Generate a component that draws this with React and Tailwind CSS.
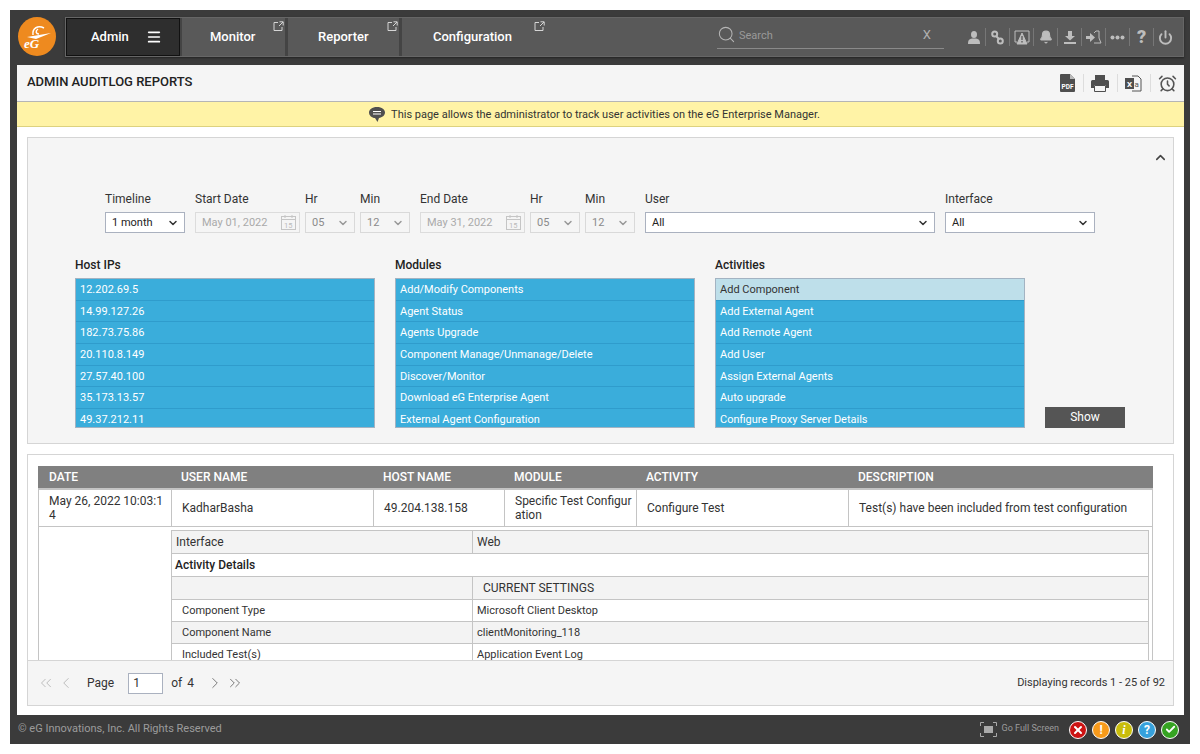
import React from "react";
import { ChevronDown, ChevronUp, ChevronLeft, ChevronRight, ChevronsLeft, ChevronsRight, Search, Menu, Bell, Power, Check, X, AlarmClock } from "lucide-react";

const Ext = () => (
  <svg width="11" height="11" viewBox="0 0 11 11" fill="none" stroke="#d5d5d5" strokeWidth="1" className="absolute">
    <path d="M5 1.500H1V9.500H9V6M6.500 .8H10.200V4.500M10 1L6 5" />
  </svg>
);

const Sep = () => <span className="w-px h-[18px] bg-[#777]" />;

function Logo() {
  return (
    <svg width="38" height="39" viewBox="0 0 38 39" className="shrink-0">
      <ellipse cx="19" cy="19.500" rx="19" ry="19.500" fill="#ee8a1f" />
      <path d="M15 18C14 11 20 8 26 11M20 12C17 14 18 17 21 17" fill="none" stroke="#fff" strokeWidth="1.500" />
      <path d="M9 20L33 16L18 22Z" fill="#fff" />
      <text x="6" y="31" fontSize="13" fontWeight="700" fontStyle="italic" fill="#fff" fontFamily="'Liberation Serif',serif">eG</text>
    </svg>
  );
}

function Tab({ label, w, pl, extLeft }) {
  return (
    <div className={`relative h-full flex items-center border-r-[3px] border-r-[#444] text-white font-medium text-[13px] ${w} ${pl}`}>
      {label}
      <span className={`absolute top-[3px] ${extLeft}`}><Ext /></span>
    </div>
  );
}

const HeaderIcons = () => {
  const c = "#bdbdbd";
  const icons = [
    <svg key="u" width="12" height="13" viewBox="0 0 12 13" fill={c}><ellipse cx="6" cy="3.500" rx="3" ry="3.500" /><path d="M0 13c0-4 1-5.500 6-5.500s6 1.500 6 5.500z" /></svg>,
    <svg key="l" width="13" height="15" viewBox="0 0 13 15" fill="none" stroke={c} strokeWidth="2"><circle cx="3.700" cy="4" r="2.500" /><circle cx="9.300" cy="11" r="2.500" /><path d="M5 6L8 9" /></svg>,
    <svg key="t" width="16" height="15" viewBox="0 0 16 15" fill="none" stroke={c}><path d="M3 12H1V1H15V12H13" /><path d="M8 3L13 14H3Z" fill={c} /><path d="M8 6V10M8 11V12.500" stroke="#555" strokeWidth="1.300" /></svg>,
    <Bell key="b" size={14} color={c} fill={c} />,
    <svg key="d" width="14" height="15" viewBox="0 0 14 15" fill={c}><path d="M5 1H9V6H12L7 10.500L2 6H5Z" /><rect x="1" y="12" width="12" height="2" /></svg>,
    <svg key="s" width="17" height="15" viewBox="0 0 17 15" fill="none"><path d="M1 6H5V3L10 7.500L5 12V9H1Z" fill={c} /><path d="M9 3L11 1H14V8L16 13H9" stroke={c} /></svg>,
    <svg key="m" width="15" height="5" viewBox="0 0 15 5" fill={c}><circle cx="2.500" cy="2.500" r="2" /><circle cx="7.500" cy="2.500" r="2" /><circle cx="12.500" cy="2.500" r="2" /></svg>,
    <span key="q" className="text-[#bdbdbd] font-black text-[18px] leading-none w-[10px] text-center">?</span>,
    <Power key="p" size={15} color={c} strokeWidth={3} />,
  ];
  return (
    <div className="flex items-center ml-[18px]">
      {icons.map((ic, i) => (
        <React.Fragment key={i}>
          {i > 0 && <Sep />}
          <span className="w-[23px] flex justify-center items-center">{ic}</span>
        </React.Fragment>
      ))}
    </div>
  );
};

const Sel = ({ w, v, dis }) => (
  <div className={`${w} h-[21px] flex items-center justify-between pl-[6px] pr-[5px] border text-[11px] ${dis ? "bg-[#f5f5f5] border-[#d9d9d9] text-[#8b8b8b]" : "bg-white border-[#aab1bf] text-[#222]"}`}>
    <span className="pt-[1px]">{v}</span>
    <ChevronDown size={12} strokeWidth={3} color={dis ? "#999" : "#333"} />
  </div>
);

const DateBox = ({ v }) => (
  <div className="w-[105px] h-[21px] flex items-center justify-between pl-[6px] pr-[2px] border border-[#dcdcdc] bg-[#f5f5f5] text-[11px] text-[#aaa]">
    <span className="pt-[1px]">{v}</span>
    <svg width="17" height="17" viewBox="0 0 17 17" fill="none" stroke="#c5c5c5">
      <rect x="1.500" y="2.500" width="14" height="13" />
      <path d="M1.500 5.500H15.500M5 1V4M12 1V4" />
      <text x="4" y="14" fontSize="7.500" fill="#bbb" stroke="none">15</text>
    </svg>
  </div>
);

const F = ({ label, children }) => (
  <div className="flex flex-col">
    <div className="text-[12px] text-[#333] leading-[14px] mb-[6px]">{label}</div>
    {children}
  </div>
);

const List = ({ title, w, items, first }) => (
  <div className={w}>
    <div className="text-[12px] font-medium text-[#222] leading-[14px] mb-[6px]">{title}</div>
    <div className="h-[150px] overflow-hidden border border-[#a3b3c2] bg-[#3aaddb]">
      {items.map((t, i) => (
        <div key={t} className={`h-[21.65px] leading-[22px] pl-1 text-[11px] border-b border-b-[#2f9ccc] ${first && i === 0 ? "bg-[#bedfea] text-[#333]" : "text-white"}`}>{t}</div>
      ))}
    </div>
  </div>
);

const Row = ({ a, b, gray, small, pl = "pl-[4px]", plb = "pl-[4px]" }) => (
  <div className={`flex border-b border-b-[#c4c4c4] ${gray ? "bg-[#f3f3f3]" : "bg-white"} ${small ? "h-[22px] text-[11px] leading-[22px]" : "h-[23px] text-[12px] leading-[23px]"} text-[#333]`}>
    <div className={`w-[301px] shrink-0 border-r border-r-[#c4c4c4] ${pl}`}>{a}</div>
    <div className={`flex-1 ${plb}`}>{b}</div>
  </div>
);

export default function App() {
  const font = { fontFamily: "Roboto, 'Noto Sans', sans-serif" };
  return (
    <div style={font} className="w-[1200px] h-[754px] bg-white pt-[10px] pl-[10px] pr-[10px] overflow-hidden">
      <div className="w-[1180px] h-[734px] bg-[#3b3b3b] flex flex-col">
        {/* top bar */}
        <div className="h-[55px] shrink-0 pl-[8px] pr-[6px] pt-[7px] flex">
          <Logo />
          <div className="ml-[9px] w-[1119px] h-[40px] bg-[#595959] border border-[#666] shadow-[0_1px_2px_#222] flex items-center">
            <div className="w-[114px] h-full bg-[#2e2e2e] border border-[#111] flex items-center pl-[24px] text-white font-medium text-[13px]">
              Admin
              <Menu size={16} strokeWidth={2.500} className="ml-[17px]" />
            </div>
            <div className="w-[2px] h-full bg-[#444]" />
            <Tab label="Monitor" w="w-[106px]" pl="pl-[28px]" extLeft="left-[91px]" />
            <Tab label="Reporter" w="w-[114px]" pl="pl-[30px]" extLeft="left-[99px]" />
            <div className="relative h-full flex items-center text-white font-medium text-[13px] pl-[31px] w-[315px]">
              Configuration
              <span className="absolute top-[3px] left-[132px]"><Ext /></span>
            </div>
            <div className="w-[227px] h-[28px] border-b border-b-[#8a8a8a] flex items-center pr-[13px] mb-[4px]">
              <Search size={19} color="#b5b5b5" strokeWidth={1.300} />
              <span className="ml-[3px] mt-[3px] text-[11px] text-[#9a9a9a] flex-1">Search</span>
              <span className="text-[13px] text-[#b0b0b0]">X</span>
            </div>
            <HeaderIcons />
          </div>
        </div>

        {/* main white panel */}
        <div className="ml-[7px] w-[1167px] h-[650px] shrink-0 bg-white flex flex-col">
          <div className="h-[37px] shrink-0 bg-[#f5f5f5] border-b border-b-[#b5b5b5] flex items-center pl-[10px] pr-[7px]">
            <div className="text-[13px] font-medium text-[#222] flex-1 pb-[2px]">ADMIN AUDITLOG REPORTS</div>
            <div className="flex items-center text-[#555]">
              <svg width="15" height="18" viewBox="0 0 15 18"><path d="M0 1a1 1 0 0 1 1-1H10L15 5V17a1 1 0 0 1-1 1H1a1 1 0 0 1-1-1Z" fill="#4f4f4f" /><path d="M10 0V5H15Z" fill="#bbb" /><text x="1.500" y="15" fontSize="6.500" fontWeight="700" fill="#fff">PDF</text></svg>
              <span className="w-px h-[18px] bg-[#ddd] mx-[7.500px]" />
              <svg width="18" height="17" viewBox="0 0 18 17"><path d="M4 0H14V5H4Z" fill="#4f4f4f" /><path d="M1.500 5H16.500A1.500 1.500 0 0 1 18 6.500V13H15V10H3V13H0V6.500A1.500 1.500 0 0 1 1.500 5Z" fill="#4f4f4f" /><path d="M3.500 10.500H14.500V16.500H3.500Z" fill="none" stroke="#4f4f4f" /></svg>
              <span className="w-px h-[18px] bg-[#ddd] mx-[7.500px]" />
              <svg width="17" height="17" viewBox="0 0 17 17"><path d="M7 1H13L16 4V16H7" fill="none" stroke="#555" /><rect x="0" y="3" width="9" height="11" fill="#4f4f4f" /><text x="2" y="11.500" fontSize="8" fontWeight="700" fill="#fff">X</text><text x="9.500" y="12" fontSize="8" fill="#555">a</text></svg>
              <span className="w-px h-[18px] bg-[#ddd] mx-[7.500px]" />
              <AlarmClock size={19} strokeWidth={2} />
            </div>
          </div>
          <div className="h-[25px] shrink-0 bg-[#fff3a6] border-b border-b-[#ddd27f] flex items-center justify-center text-[11px] text-[#333] pr-[12px]">
            <svg width="16" height="15" viewBox="0 0 16 15" className="mr-[6px]"><path d="M8 0C3 0 0 2.500 0 5.500S3 11 6 11L8.500 15L10 11C13 10.500 16 8.500 16 5.500S13 0 8 0Z" fill="#4f4f4f" /><rect x="4" y="4" width="8" height="1" fill="#fff" /><rect x="4" y="6.500" width="8" height="1" fill="#fff" /></svg>
            <span className="pt-[2px]">This page allows the administrator to track user activities on the eG Enterprise Manager.</span>
          </div>

          {/* filters */}
          <div className="ml-[10px] mt-[10px] w-[1147px] h-[307px] shrink-0 bg-[#f5f5f5] border border-[#d5d5d5] relative">
            <ChevronUp size={15} strokeWidth={2.500} color="#444" className="absolute right-[5px] top-[12px]" />
            <div className="flex gap-[10px] ml-[77px] mt-[54px] items-start">
              <F label="Timeline"><Sel w="w-[80px]" v="1 month" /></F>
              <div className="flex gap-[5px]">
                <F label="Start Date"><DateBox v="May 01, 2022" /></F>
                <F label="Hr"><Sel w="w-[50px]" v="05" dis /></F>
                <F label="Min"><Sel w="w-[50px]" v="12" dis /></F>
              </div>
              <div className="flex gap-[5px]">
                <F label="End Date"><DateBox v="May 31, 2022" /></F>
                <F label="Hr"><Sel w="w-[50px]" v="05" dis /></F>
                <F label="Min"><Sel w="w-[50px]" v="12" dis /></F>
              </div>
              <F label="User"><Sel w="w-[290px]" v="All" /></F>
              <F label="Interface"><Sel w="w-[150px]" v="All" /></F>
            </div>
            <div className="flex gap-[20px] ml-[47px] mt-[25px] items-end">
              <List title="Host IPs" w="w-[300px]" items={["12.202.69.5", "14.99.127.26", "182.73.75.86", "20.110.8.149", "27.57.40.100", "35.173.13.57", "49.37.212.11"]} />
              <List title="Modules" w="w-[300px]" items={["Add/Modify Components", "Agent Status", "Agents Upgrade", "Component Manage/Unmanage/Delete", "Discover/Monitor", "Download eG Enterprise Agent", "External Agent Configuration"]} />
              <List title="Activities" w="w-[310px]" first items={["Add Component", "Add External Agent", "Add Remote Agent", "Add User", "Assign External Agents", "Auto upgrade", "Configure Proxy Server Details"]} />
              <div className="w-[80px] h-[21px] bg-[#555] text-white text-[12px] flex items-center justify-center pb-[2px]">Show</div>
            </div>
          </div>

          {/* results */}
          <div className="ml-[10px] mt-[10px] w-[1147px] h-[252px] shrink-0 border border-[#d5d5d5] flex flex-col">
            <div className="h-[205px] shrink-0 overflow-hidden pl-[10px] pt-[11px]">
              <div className="w-[1115px] border-x border-x-[#c4c4c4] h-[300px]">
                <div className="h-[22px] bg-[#808080] border-b-2 border-b-[#c4c4c4] flex pl-[1px] text-white font-medium text-[12px] leading-[22px] box-content -mx-px">
                  <div className="w-[132px] pl-[10px]">DATE</div>
                  <div className="w-[202px] pl-[10px]">USER NAME</div>
                  <div className="w-[131px] pl-[10px]">HOST NAME</div>
                  <div className="w-[132px] pl-[10px]">MODULE</div>
                  <div className="w-[212px] pl-[10px]">ACTIVITY</div>
                  <div className="flex-1 pl-[10px]">DESCRIPTION</div>
                </div>
                <div className="h-[37px] flex text-[12px] text-[#333] leading-[14.500px] border-b border-b-[#c4c4c4]">
                  <div className="w-[132px] pl-[10px] pr-[2px] flex items-center break-all">May 26, 2022 10:03:14</div>
                  <div className="w-[202px] pl-[10px] border-l border-l-[#c4c4c4] flex items-center">KadharBasha</div>
                  <div className="w-[131px] pl-[10px] border-l border-l-[#c4c4c4] flex items-center">49.204.138.158</div>
                  <div className="w-[132px] pl-[10px] pr-[3px] border-l border-l-[#c4c4c4] flex items-center break-all">Specific Test Configuration</div>
                  <div className="w-[212px] pl-[10px] border-l border-l-[#c4c4c4] flex items-center">Configure Test</div>
                  <div className="flex-1 pl-[10px] border-l border-l-[#c4c4c4] flex items-center">Test(s) have been included from test configuration</div>
                </div>
                <div className="ml-[132px] mr-[3px] mt-[3px] border-x border-x-[#c4c4c4]">
                  <div className="border-t border-t-[#c4c4c4]">
                    <Row a="Interface" b="Web" gray />
                  </div>
                  <div className="h-[22px] bg-white pl-[3px] text-[12px] font-medium text-[#222] leading-[22px]">Activity Details</div>
                  <div className="border-t border-t-[#c4c4c4]">
                    <Row a="" b="CURRENT SETTINGS" gray plb="pl-[10px]" />
                  </div>
                  <Row small a="Component Type" b="Microsoft Client Desktop" pl="pl-[10px]" />
                  <Row small gray a="Component Name" b="clientMonitoring_118" pl="pl-[10px]" />
                  <Row small a="Included Test(s)" b="Application Event Log" pl="pl-[10px]" />
                </div>
              </div>
            </div>
            <div className="flex-1 bg-[#f5f5f5] border-t border-t-[#d5d5d5] flex items-center pl-[9px] pr-[8px] text-[12px] text-[#333]">
              <ChevronsLeft size={18} color="#bbb" strokeWidth={1.300} />
              <ChevronLeft size={18} color="#bbb" strokeWidth={1.300} className="ml-[2px]" />
              <span className="ml-[12px] pb-[1px]">Page</span>
              <div className="ml-[14px] w-[35px] h-[21px] bg-white border border-[#aab1bf] pl-[4px] leading-[19px]">1</div>
              <span className="ml-[8px]">of</span>
              <span className="ml-[5px]">4</span>
              <ChevronRight size={18} color="#777" strokeWidth={1.300} className="ml-[12px]" />
              <ChevronsRight size={18} color="#777" strokeWidth={1.300} className="ml-[2px]" />
              <span className="ml-auto text-[11px]">Displaying records 1 - 25 of 92</span>
            </div>
          </div>
        </div>

        {/* footer */}
        <div className="flex-1 flex items-center pl-[8px] pr-[11px] text-[11px] text-[#9b9b9b]">
          <span>© eG Innovations, Inc. All Rights Reserved</span>
          <svg width="17" height="15" viewBox="0 0 17 15" fill="none" stroke="#aaa" className="ml-auto"><path d="M.5 4V.5H4M13 .5H16.500V4M16.500 11V14.500H13M4 14.500H.5V11" /><rect x="4" y="4" width="9" height="7" fill="#aaa" stroke="none" /></svg>
          <span className="ml-[5px] text-[9px] mr-[10px] -mt-[2px]">Go Full Screen</span>
          <div className="flex gap-[5px]">
            <span className="w-[18px] h-[18px] rounded-full bg-[#cc1313] border border-white flex items-center justify-center"><X size={12} color="#fff" strokeWidth={4} /></span>
            <span className="w-[18px] h-[18px] rounded-full bg-[#f79a1b] border border-white flex items-center justify-center text-white font-bold text-[12px] leading-none">!</span>
            <span className="w-[18px] h-[18px] rounded-full bg-[#c9bd0c] border border-white flex items-center justify-center text-white font-bold italic text-[12px] leading-none" style={{ fontFamily: "'Liberation Serif',serif" }}>i</span>
            <span className="w-[18px] h-[18px] rounded-full bg-[#36a1dc] border border-white flex items-center justify-center text-white font-bold text-[12px] leading-none">?</span>
            <span className="w-[18px] h-[18px] rounded-full bg-[#35a322] border border-white flex items-center justify-center"><Check size={11} color="#fff" strokeWidth={4} /></span>
          </div>
        </div>
      </div>
    </div>
  );
}
